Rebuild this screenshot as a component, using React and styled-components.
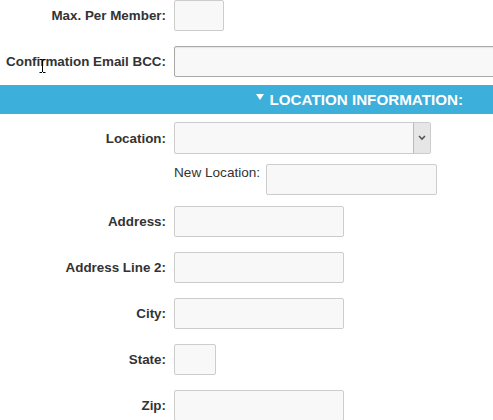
import styled, { createGlobalStyle } from "styled-components";

const GlobalStyle = createGlobalStyle`
  body {
    margin: 0;
    background: #fff;
    font-family: "Liberation Sans", Arial, sans-serif;
    overflow: hidden;
  }
`;

const Page = styled.div`
  position: relative;
  width: 493px;
  height: 420px;
  overflow: hidden;
`;

const Row = styled.div`
  display: flex;
  align-items: center;
  margin-top: ${(p) => p.$top || 0}px;
`;

const Label = styled.label`
  flex-shrink: 0;
  width: 166px;
  padding-right: 8px;
  text-align: right;
  font-size: 13.4px;
  font-weight: bold;
  color: #333;
  white-space: nowrap;
`;

const Input = styled.div`
  box-sizing: border-box;
  width: ${(p) => p.$width}px;
  height: ${(p) => p.$height || 31}px;
  flex-shrink: 0;
  background: #f8f8f8;
  border: 1px solid ${(p) => (p.$dark ? "#a9a9a9" : "#ccc")};
  border-radius: 2px;
  box-shadow: ${(p) => (p.$dark ? "inset 0 1px 1px rgba(0,0,0,0.08)" : "none")};
`;

const Select = styled.div`
  box-sizing: border-box;
  display: flex;
  justify-content: flex-end;
  flex-shrink: 0;
  width: 257px;
  height: 32px;
  background: #f8f8f8;
  border: 1px solid #ccc;
  border-radius: 2px;
`;

const Arrow = styled.div`
  width: 16px;
  display: flex;
  align-items: center;
  justify-content: center;
  background: #e6e6e6;
  border-left: 1px solid #bbb;
`;

const SubRow = styled.div`
  display: flex;
  align-items: flex-start;
  margin: 10px 0 0 174px;
`;

const SubLabel = styled.span`
  width: 92px;
  padding-top: 1px;
  font-size: 13.6px;
  color: #333;
`;

const SectionBar = styled.div`
  display: flex;
  align-items: center;
  justify-content: flex-end;
  gap: 6px;
  height: 29px;
  margin-top: 8px;
  padding-right: 30px;
  background: #3cafdb;
  color: #fff;
  font-size: 15.2px;
  font-weight: bold;
`;

const Caret = styled.svg`
  margin-top: -5px;
`;

const Cursor = styled.svg`
  position: absolute;
  left: 39px;
  top: 59px;
`;

const fields = [
  { label: "Address:", width: 170, top: 11 },
  { label: "Address Line 2:", width: 170, top: 15 },
  { label: "City:", width: 170, top: 15 },
  { label: "State:", width: 42, top: 15 },
  { label: "Zip:", width: 170, top: 15 },
];

export default function App() {
  return (
    <Page>
      <GlobalStyle />
      <Row>
        <Label>Max. Per Member:</Label>
        <Input $width={50} />
      </Row>
      <Row $top={15}>
        <Label>Confirmation Email BCC:</Label>
        <Input $width={330} $dark />
      </Row>

      <SectionBar>
        <Caret width="8" height="6" viewBox="0 0 8 6">
          <path d="M0 0h8L4 6z" fill="#fff" />
        </Caret>
        LOCATION INFORMATION:
      </SectionBar>

      <Row $top={8}>
        <Label>Location:</Label>
        <Select>
          <Arrow>
            <svg width="8" height="6" viewBox="0 0 8 6">
              <path d="M1 1l3 3 3-3" stroke="#555" strokeWidth="1.6" fill="none" />
            </svg>
          </Arrow>
        </Select>
      </Row>
      <SubRow>
        <SubLabel>New Location:</SubLabel>
        <Input $width={171} />
      </SubRow>

      {fields.map((f) => (
        <Row key={f.label} $top={f.top}>
          <Label>{f.label}</Label>
          <Input $width={f.width} />
        </Row>
      ))}

      <Cursor width="7" height="14" viewBox="0 0 7 14">
        <path d="M0.5 0.5h2.5M4 0.5h2.5M3.5 1v12M0.5 13.5h2.5M4 13.5h2.5" stroke="#000" strokeWidth="1" fill="none" />
      </Cursor>
    </Page>
  );
}
